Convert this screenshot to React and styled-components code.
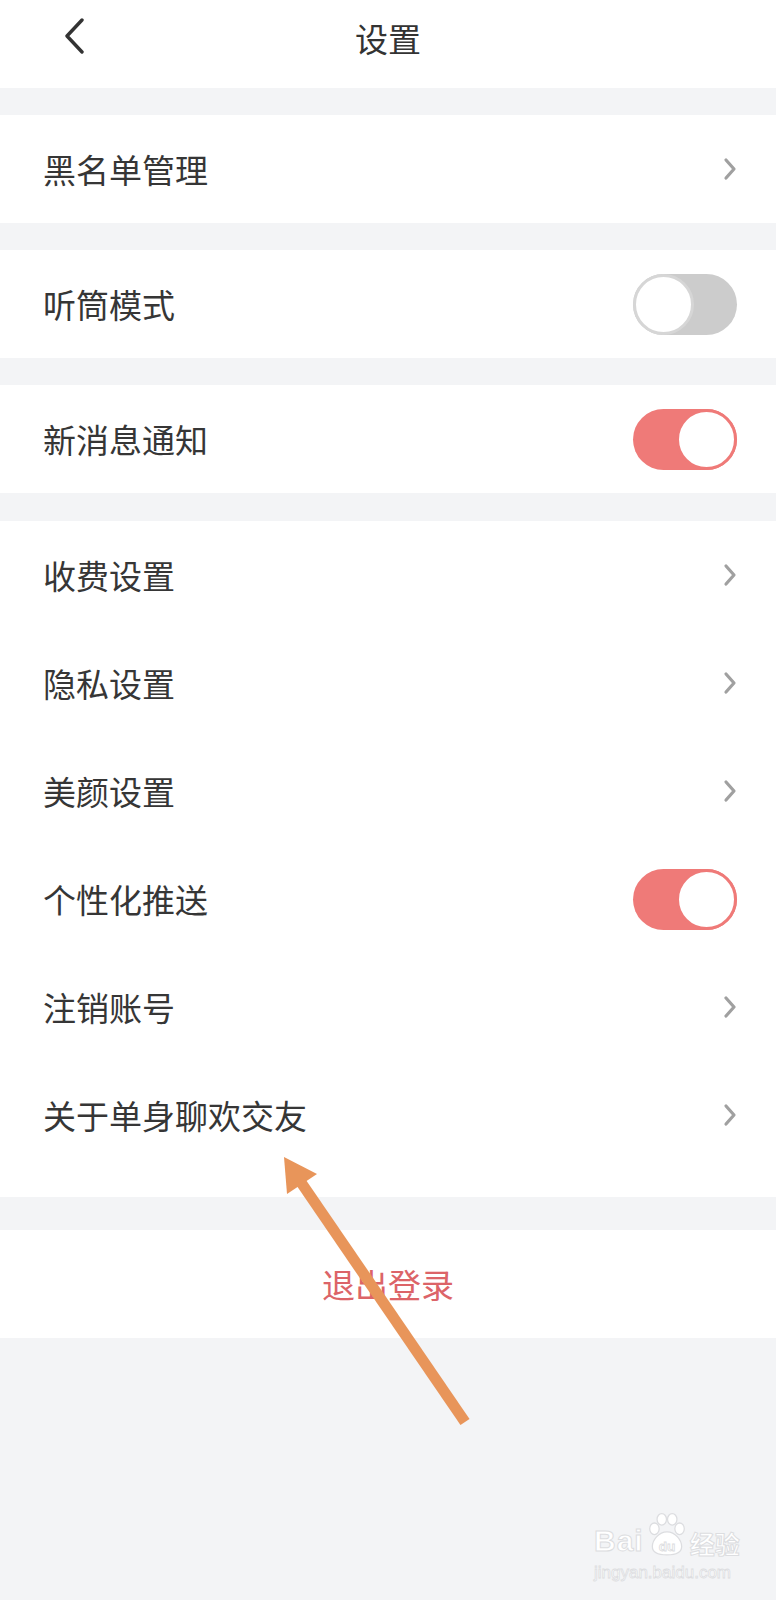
import React from "react";
import styled, { createGlobalStyle } from "styled-components";

const GlobalStyle = createGlobalStyle`
    html, body {
        margin: 0;
        padding: 0;
        background: #f3f4f6;
    }
    body {
        font-family: "Noto Sans CJK SC", "Noto Sans", sans-serif;
    }
`;

const groups = [
    { gap: 27, items: [{ label: "黑名单管理", type: "link" }] },
    { gap: 27, items: [{ label: "听筒模式", type: "switch", on: false }] },
    { gap: 27, items: [{ label: "新消息通知", type: "switch", on: true }] },
    {
        gap: 28,
        list: true,
        items: [
            { label: "收费设置", type: "link" },
            { label: "隐私设置", type: "link" },
            { label: "美颜设置", type: "link" },
            { label: "个性化推送", type: "switch", on: true },
            { label: "注销账号", type: "link" },
            { label: "关于单身聊欢交友", type: "link" },
        ],
    },
];

const BackIcon = () => (
    <svg width="22" height="36" viewBox="0 0 22 36">
        <polyline points="18,2 3,18 18,34" fill="none" stroke="#333" strokeWidth="3.4" strokeLinecap="round" strokeLinejoin="round" />
    </svg>
);

const ChevronIcon = () => (
    <svg width="14" height="24" viewBox="0 0 14 24">
        <polyline points="3,3 11,12 3,21" fill="none" stroke="#a0a0a0" strokeWidth="3.2" strokeLinecap="round" strokeLinejoin="round" />
    </svg>
);

const PawIcon = () => (
    <svg width="42" height="44" viewBox="0 0 40 42">
        <g fill="#fff" stroke="#dcdde0" strokeWidth="1.2">
            <ellipse cx="8" cy="16" rx="4.5" ry="5.5" />
            <ellipse cx="15" cy="7" rx="4.5" ry="5.5" />
            <ellipse cx="25" cy="7" rx="4.5" ry="5.5" />
            <ellipse cx="32" cy="16" rx="4.5" ry="5.5" />
            <path d="M20 19 C12 19 6 27 6 33 C6 39 12 41 20 41 C28 41 34 39 34 33 C34 27 28 19 20 19 Z" />
        </g>
        <text x="20" y="37" textAnchor="middle" fontFamily="Liberation Sans, sans-serif" fontWeight="700" fontSize="13" fill="#fff" stroke="#dcdde0" strokeWidth="0.8">du</text>
    </svg>
);

const App = () => {
    return (
        <Page>
            <GlobalStyle />
            <Header>
                <BackButton>
                    <BackIcon />
                </BackButton>
                <Title>设置</Title>
            </Header>

            {groups.map((group, gi) => (
                <Group key={gi} $gap={group.gap} $list={group.list}>
                    {group.items.map((item) => (
                        <Row key={item.label}>
                            <Label>{item.label}</Label>
                            {item.type === "link" ? (
                                <ChevronIcon />
                            ) : (
                                <Switch $on={item.on}>
                                    <Knob $on={item.on} />
                                </Switch>
                            )}
                        </Row>
                    ))}
                </Group>
            ))}

            <Group $gap={33}>
                <LogoutRow>退出登录</LogoutRow>
            </Group>

            <Annotation width="776" height="1600" viewBox="0 0 776 1600">
                <line x1="465" y1="1422" x2="298" y2="1178" stroke="#e8955a" strokeWidth="11" />
                <polygon points="284,1157 317,1174 287,1194" fill="#e8955a" />
            </Annotation>

            <Watermark>
                <BrandLine>
                    <BrandText>Bai</BrandText>
                    <PawIcon />
                    <BrandCn>经验</BrandCn>
                </BrandLine>
                <BrandUrl>jingyan.baidu.com</BrandUrl>
            </Watermark>
        </Page>
    );
};

const Page = styled.div`
    position: relative;
    min-height: 1600px;
    background: #f3f4f6;
    overflow: hidden;
`;

const Header = styled.header`
    position: relative;
    height: 88px;
    padding-bottom: 12px;
    box-sizing: border-box;
    background: #ffffff;
    display: flex;
    align-items: center;
    justify-content: center;
`;

const BackButton = styled.button`
    position: absolute;
    left: 64px;
    top: 18px;
    padding: 0;
    margin: 0;
    border: none;
    background: transparent;
    display: flex;
`;

const Title = styled.h1`
    margin: 0;
    font-size: 33px;
    font-weight: 400;
    color: #333333;
    line-height: 1;
`;

const Group = styled.section`
    margin-top: ${(p) => p.$gap}px;
    background: #ffffff;
    padding: ${(p) => (p.$list ? "0 0 28px" : "0")};
`;

const Row = styled.div`
    height: 108px;
    padding: 0 39px 0 43px;
    box-sizing: border-box;
    display: flex;
    align-items: center;
    justify-content: space-between;
`;

const Label = styled.span`
    font-size: 33px;
    color: #363636;
    line-height: 1;
`;

const Switch = styled.span`
    width: 104px;
    height: 61px;
    border-radius: 31px;
    background: ${(p) => (p.$on ? "#ef7a78" : "#cccccc")};
    display: flex;
    justify-content: ${(p) => (p.$on ? "flex-end" : "flex-start")};
`;

const Knob = styled.span`
    width: 61px;
    height: 61px;
    box-sizing: border-box;
    border-radius: 50%;
    background: #ffffff;
    border: 3px solid ${(p) => (p.$on ? "#ef7a78" : "#d6d6d6")};
`;

const LogoutRow = styled.div`
    height: 108px;
    display: flex;
    align-items: center;
    justify-content: center;
    font-size: 33px;
    color: #dc6468;
`;

const Annotation = styled.svg`
    position: absolute;
    left: 0;
    top: 0;
    pointer-events: none;
`;

const Watermark = styled.div`
    position: absolute;
    left: 594px;
    top: 1512px;
    display: flex;
    flex-direction: column;
    align-items: flex-start;
    color: #ffffff;
`;

const BrandLine = styled.div`
    display: flex;
    align-items: flex-end;
    gap: 2px;
`;

const BrandText = styled.span`
    font-family: "Liberation Sans", sans-serif;
    font-weight: 700;
    font-size: 30px;
    line-height: 1;
    letter-spacing: 1px;
    -webkit-text-stroke: 1px #dcdde0;
`;

const BrandCn = styled.span`
    font-family: "Noto Sans CJK SC", sans-serif;
    font-weight: 700;
    font-size: 25px;
    line-height: 1;
    -webkit-text-stroke: 1px #dcdde0;
`;

const BrandUrl = styled.span`
    margin-top: 8px;
    font-family: "Liberation Sans", sans-serif;
    font-size: 17px;
    line-height: 1;
    -webkit-text-stroke: 0.8px #dcdde0;
`;

export default App;
